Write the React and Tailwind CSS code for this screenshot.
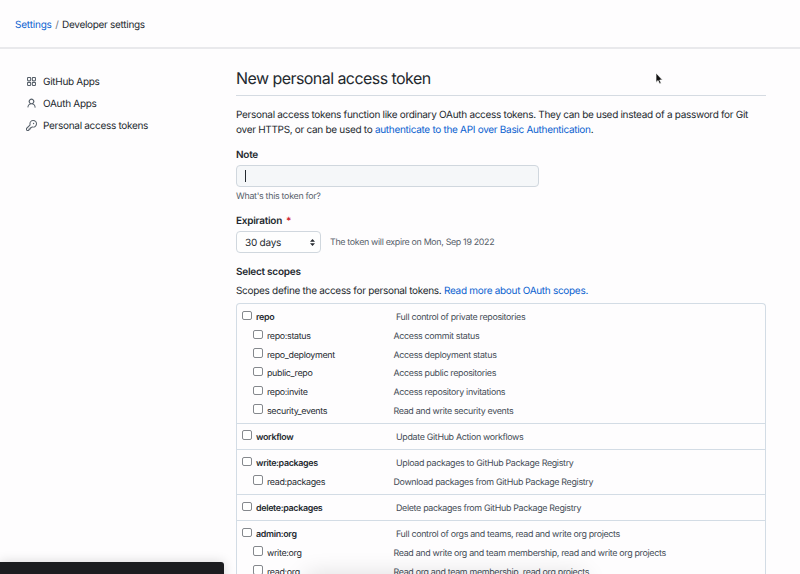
const groups = [
  [
    ['repo', 'Full control of private repositories'],
    ['repo:status', 'Access commit status'],
    ['repo_deployment', 'Access deployment status'],
    ['public_repo', 'Access public repositories'],
    ['repo:invite', 'Access repository invitations'],
    ['security_events', 'Read and write security events'],
  ],
  [['workflow', 'Update GitHub Action workflows']],
  [
    ['write:packages', 'Upload packages to GitHub Package Registry'],
    ['read:packages', 'Download packages from GitHub Package Registry'],
  ],
  [['delete:packages', 'Delete packages from GitHub Package Registry']],
  [
    ['admin:org', 'Full control of orgs and teams, read and write org projects'],
    ['write:org', 'Read and write org and team membership, read and write org projects'],
    ['read:org', 'Read org and team membership, read org projects'],
  ],
];

function Icon({ className, children }) {
  return (
    <svg viewBox="0 0 16 16" fill="currentColor" className={className} aria-hidden="true">
      {children}
    </svg>
  );
}

function AppsIcon() {
  return (
    <Icon className="size-[11px] text-[#57606a]">
      <path
        fillRule="evenodd"
        d="M1.5 3.25c0-.966.784-1.75 1.75-1.75h2.5c.966 0 1.75.784 1.75 1.75v2.5A1.75 1.75 0 015.75 7.5h-2.5A1.75 1.75 0 011.5 5.75v-2.5zM3.25 3a.25.25 0 00-.25.25v2.5c0 .138.112.25.25.25h2.5A.25.25 0 006 5.75v-2.5A.25.25 0 005.75 3h-2.5zM1.5 10.25c0-.966.784-1.75 1.75-1.75h2.5c.966 0 1.75.784 1.75 1.75v2.5a1.75 1.75 0 01-1.75 1.75h-2.5a1.75 1.75 0 01-1.75-1.75v-2.5zM3.25 10a.25.25 0 00-.25.25v2.5c0 .138.112.25.25.25h2.5a.25.25 0 00.25-.25v-2.5a.25.25 0 00-.25-.25h-2.5zM8.5 3.25c0-.966.784-1.75 1.75-1.75h2.5c.966 0 1.75.784 1.75 1.75v2.5a1.75 1.75 0 01-1.75 1.75h-2.5A1.75 1.75 0 018.5 5.75v-2.5zM10.25 3a.25.25 0 00-.25.25v2.5c0 .138.112.25.25.25h2.5a.25.25 0 00.25-.25v-2.5a.25.25 0 00-.25-.25h-2.5zM8.5 10.25c0-.966.784-1.75 1.75-1.75h2.5c.966 0 1.75.784 1.75 1.75v2.5a1.75 1.75 0 01-1.75 1.75h-2.5a1.75 1.75 0 01-1.75-1.75v-2.5zm1.75-.25a.25.25 0 00-.25.25v2.5c0 .138.112.25.25.25h2.5a.25.25 0 00.25-.25v-2.5a.25.25 0 00-.25-.25h-2.5z"
      />
    </Icon>
  );
}

function PersonIcon() {
  return (
    <Icon className="size-[11px] text-[#57606a]">
      <path
        fillRule="evenodd"
        d="M10.5 5a2.5 2.5 0 11-5 0 2.5 2.5 0 015 0zm.061 3.073a4 4 0 10-5.123 0 6.004 6.004 0 00-3.431 5.142.75.75 0 001.498.07 4.5 4.5 0 018.99 0 .75.75 0 101.498-.07 6.005 6.005 0 00-3.432-5.142z"
      />
    </Icon>
  );
}

function KeyIcon() {
  return (
    <Icon className="size-[11px] text-[#57606a]">
      <path
        fillRule="evenodd"
        d="M6.5 5.5a4 4 0 112.731 3.795.75.75 0 00-.768.18L7.44 10.5H6.25a.75.75 0 00-.75.75v1.19l-.06.06H4.25a.75.75 0 00-.75.75v1.19l-.06.06H1.75a.25.25 0 01-.25-.25v-1.69l5.024-5.023a.75.75 0 00.181-.768A3.995 3.995 0 016.5 5.5zm4-5.5a5.5 5.5 0 00-5.348 6.788L.22 11.72a.75.75 0 00-.22.53v2C0 15.216.784 16 1.75 16h2a.75.75 0 00.53-.22l.5-.5a.75.75 0 00.22-.53V14h.75a.75.75 0 00.53-.22l.5-.5a.75.75 0 00.22-.53V12h.75a.75.75 0 00.53-.22l.932-.932A5.5 5.5 0 1010.5 0zm.5 6a1 1 0 100-2 1 1 0 000 2z"
      />
    </Icon>
  );
}

function Checkbox() {
  return <span className="mb-[3px] size-[9.5px] shrink-0 rounded-[2px] border border-[#85888d] bg-white" />;
}

function ScopeRow({ name, description, child }) {
  return (
    <li
      className={`flex h-[18.67px] items-center text-[8.9px] tracking-[-0.32px] whitespace-nowrap ${child ? 'pl-[16px]' : 'pl-[5px]'}`}
    >
      <Checkbox />
      <span className={`ml-[4.5px] pt-[2px] ${child ? 'w-[126.5px]' : 'w-[140px] font-semibold'}`}>{name}</span>
      <span className="pt-[2px] text-[#434b55]">{description}</span>
    </li>
  );
}

const nav = [
  [AppsIcon, 'GitHub Apps'],
  [PersonIcon, 'OAuth Apps'],
  [KeyIcon, 'Personal access tokens'],
];

export default function App() {
  return (
    <div className="relative h-[574px] w-[800px] overflow-hidden bg-[#fefdfe] font-['Inter',sans-serif] text-[10px] tracking-[-0.3px] text-[#24292f] [text-rendering:geometricPrecision]">
      <header className="flex h-[49px] items-center border-b-2 border-[#e9e9ec] pt-[3px] pl-[15px] whitespace-nowrap">
        <a className="tracking-[-0.2px] text-[#0b62d0]">Settings</a>
        <span className="mx-[3.5px] text-[#6e7781]">/</span>
        <span>Developer settings</span>
      </header>

      <div className="flex">
        <nav className="flex w-[236px] shrink-0 flex-col pt-[21px] pl-[26px]">
          {nav.map(([Glyph, label]) => (
            <a key={label} className="flex h-[22px] items-center gap-[6px]">
              <Glyph />
              <span className="pt-[2px]">{label}</span>
            </a>
          ))}
        </nav>

        <main className="flex w-[530px] shrink-0 flex-col">
          <h1 className="mt-[16px] h-[31px] border-b border-[#d5dbe2] text-[16px] leading-[26px] tracking-[-0.56px]">
            New personal access token
          </h1>
          <p className="mt-[12px] h-[29px] leading-[14.5px] whitespace-nowrap">
            Personal access tokens function like ordinary OAuth access tokens. They can be used instead of a password for Git
            <br />
            over HTTPS, or can be used to <a className="text-[#0b62d0]">authenticate to the API over Basic Authentication</a>.
          </p>
          <label className="mt-[11px] h-[14px] leading-[14px] font-semibold tracking-[-0.25px]">Note</label>
          <div className="mt-[3px] flex h-[22px] w-[303px] items-center rounded-[4px] border border-[#d0d7de] bg-[#f5f7f9] pl-[8px]">
            <span className="h-[12px] w-px bg-[#24292f]" />
          </div>
          <p className="mt-[4px] h-[12px] text-[8.9px] leading-[12px] text-[#57606a]">What's this token for?</p>
          <div className="mt-[11px] flex h-[14px] gap-[4px] leading-[14px] font-semibold tracking-[-0.25px]">
            Expiration <span className="text-[#cf222e]">*</span>
          </div>
          <div className="mt-[3px] flex h-[22px] items-center">
            <div className="flex h-[22px] w-[85px] items-center justify-between rounded-[4px] border border-[#d0d7de] bg-[#fefefe] pr-[5px] pl-[8px]">
              <span className="pt-[2px] tracking-[-0.25px]">30 days</span>
              <svg viewBox="0 0 5 7" className="h-[7px] w-[5px]" fill="#24292f">
                <path d="M2.5 0 5 2.8H0zM2.5 7 0 4.2h5z" />
              </svg>
            </div>
            <span className="ml-[9px] pt-[2px] text-[8.9px] tracking-[-0.33px] text-[#57606a]">
              The token will expire on Mon, Sep 19 2022
            </span>
          </div>
          <h2 className="mt-[12px] h-[14px] leading-[14px] font-semibold tracking-[-0.25px]">Select scopes</h2>
          <p className="mt-[5px] h-[14px] leading-[14px]">
            Scopes define the access for personal tokens. <a className="text-[#0b62d0]">Read more about OAuth scopes.</a>
          </p>
          <div className="mt-[5px] rounded-t-[4px] border border-b-0 border-[#d3dce5]">
            {groups.map((rows) => (
              <ul key={rows[0][0]} className="border-b border-[#d3dce5] pt-[3.8px] pb-[2.8px]">
                {rows.map(([name, description], i) => (
                  <ScopeRow key={name} name={name} description={description} child={i > 0} />
                ))}
              </ul>
            ))}
          </div>
        </main>
      </div>

      <div className="absolute top-[580px] left-[310px] h-[10px] w-[270px] shadow-[0_0_24px_4px_rgba(0,0,0,0.16)]" />
      <div className="absolute top-[562px] left-0 h-[20px] w-[224px] rounded-tr-[3px] bg-[#1b1c1f] shadow-[0_0_12px_rgba(0,0,0,0.16)]" />
      <svg viewBox="0 0 8 13" className="absolute top-[72px] left-[655px] h-[13px] w-[8px]">
        <path d="M1 1v9.4l2.1-1.9L4.6 12l1.6-.7-1.5-3.3h2.8z" fill="#111" stroke="#fff" strokeWidth=".7" />
      </svg>
    </div>
  );
}
